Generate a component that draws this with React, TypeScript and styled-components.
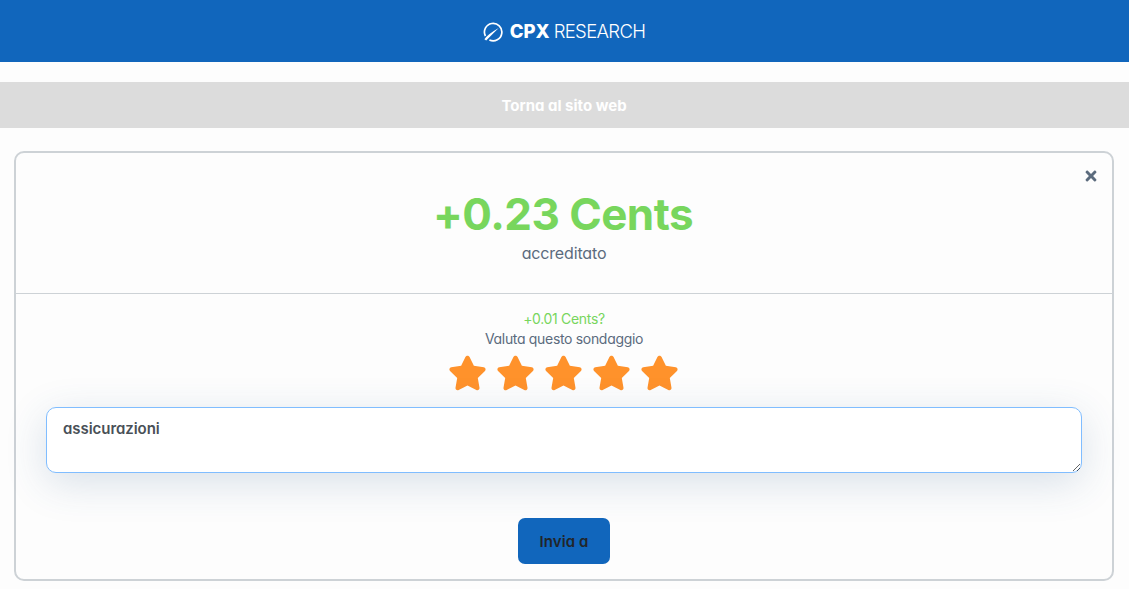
import React from 'react';
import styled, { createGlobalStyle } from 'styled-components';
import { FaStar, FaTimes } from 'react-icons/fa';

const GlobalStyle = createGlobalStyle`
  *, *::before, *::after { box-sizing: border-box; }
  body {
    margin: 0;
    background: #fdfdfd;
    color: #5b6b7d;
    font-family: Inter, "Liberation Sans", sans-serif;
    font-feature-settings: "cv11";
    font-size: 16px;
  }
`;

const Header = styled.header`
  display: flex;
  align-items: center;
  justify-content: center;
  height: 62px;
  padding: 1px 1px 0 0;
  background: #1166bc;
  color: #fff;
`;

const LogoMark = styled.svg`
  width: 20px;
  height: 20px;
  margin-right: 7px;
`;

const LogoText = styled.span<{ $bold?: boolean }>`
  font-size: 18.5px;
  line-height: 24px;
  padding-bottom: 1px;
  font-weight: ${p => (p.$bold ? 800 : 350)};
  letter-spacing: ${p => (p.$bold ? 0 : -0.65)}px;
  margin-right: ${p => (p.$bold ? 4 : 0)}px;
`;

const BackBar = styled.button`
  display: block;
  width: 100%;
  height: 46px;
  margin: 20px 0 23px;
  padding: 1px 1px 0 0;
  border: 0;
  background: #dcdcdc;
  color: #fff;
  font: inherit;
  font-size: 15px;
  font-weight: 700;
`;

const Card = styled.main`
  width: 1100px;
  height: 430px;
  margin-left: 14px;
  border: 2px solid #cdd2d6;
  border-radius: 10px;
`;

const Credit = styled.section`
  position: relative;
  height: 141px;
  padding-top: 34px;
  border-bottom: 1px solid #cdd2d6;
  text-align: center;
`;

const Close = styled.button`
  position: absolute;
  top: 15px;
  right: 13px;
  display: flex;
  padding: 0;
  border: 0;
  background: none;
  color: #5b6b7d;
  font-size: 16px;
`;

const Amount = styled.h1`
  margin: 0;
  color: #78d65d;
  font-size: 44px;
  line-height: 55px;
  padding: 0 2px 1px 0;
  font-weight: 700;
  letter-spacing: -0.55px;
`;

const Credited = styled.p`
  margin: 0;
  line-height: 20px;
  font-size: 16px;
  letter-spacing: -0.15px;
`;

const Rating = styled.section`
  display: flex;
  flex-direction: column;
  align-items: center;
  padding: 15px 30px 0;
`;

const Line = styled.p<{ $bonus?: boolean }>`
  margin: 0;
  font-size: 14px;
  line-height: 20px;
  letter-spacing: -0.32px;
  color: ${p => (p.$bonus ? '#78d65d' : '#5b6b7d')};
`;

const Stars = styled.div`
  display: flex;
  gap: 8.8px;
  height: 36px;
  margin-top: 6px;
  padding-right: 1px;
  color: #ff922b;

  svg { width: 39px; height: 36px; }
`;

const Comment = styled.textarea`
  display: block;
  width: 1036px;
  height: 66px;
  margin-top: 16px;
  padding: 10px 16px;
  border: 1px solid #80bdff;
  border-radius: 10px;
  outline: 0;
  background: #fff;
  box-shadow: 0 10px 40px 0 rgba(52, 92, 138, 0.18);
  color: #495057;
  font: inherit;
  font-size: 15px;
  font-weight: 600;
  line-height: 22px;
  letter-spacing: -0.05px;
  resize: vertical;
`;

const Submit = styled.button`
  width: 92px;
  height: 46px;
  margin-top: 45px;
  padding: 1px 0 0;
  border: 0;
  border-radius: 7px;
  background: #1166bc;
  color: #212529;
  font: inherit;
  font-size: 15px;
  font-weight: 600;
  letter-spacing: 0.1px;
`;

export default function App() {
  return (
    <>
      <GlobalStyle />
      <Header>
        <LogoMark viewBox="0 0 20 20" fill="none">
          <path d="M2.4 14A8.7 8.7 0 1 1 6.4 17.9" stroke="#fff" strokeWidth="1.7" />
          <path d="M1.4 17.2Q5 12.2 15.7 6.1Q9.3 12.4 3.2 18.6Z" fill="#fff" />
        </LogoMark>
        <LogoText $bold>CPX</LogoText>
        <LogoText>RESEARCH</LogoText>
      </Header>
      <BackBar>Torna al sito web</BackBar>
      <Card>
        <Credit>
          <Close aria-label="Chiudi"><FaTimes /></Close>
          <Amount>+0.23 Cents</Amount>
          <Credited>accreditato</Credited>
        </Credit>
        <Rating>
          <Line $bonus>+0.01 Cents?</Line>
          <Line>Valuta questo sondaggio</Line>
          <Stars>
            {[1, 2, 3, 4, 5].map(n => <FaStar key={n} />)}
          </Stars>
          <Comment defaultValue="assicurazioni" spellCheck={false} />
          <Submit>Invia a</Submit>
        </Rating>
      </Card>
    </>
  );
}
